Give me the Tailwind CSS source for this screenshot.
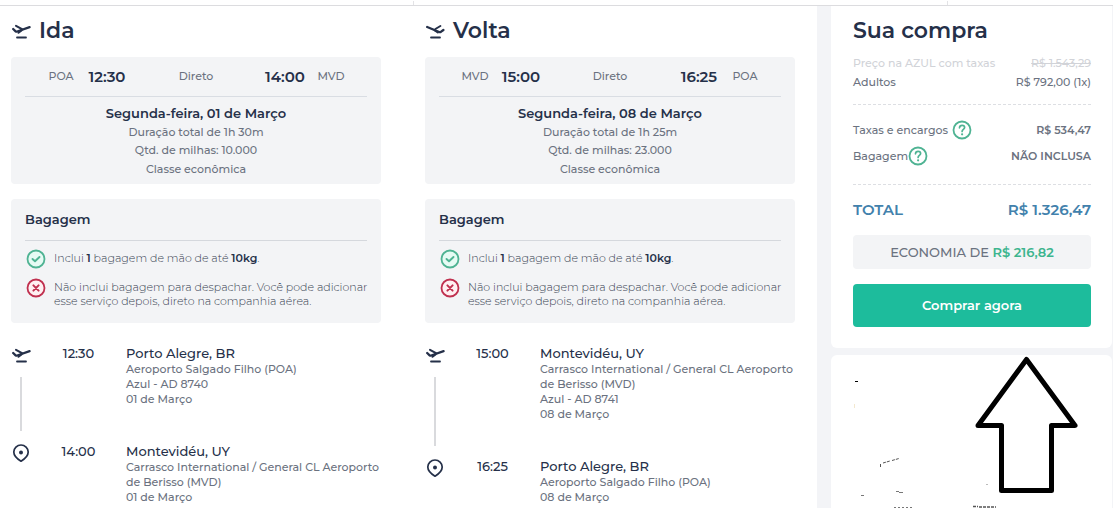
<!DOCTYPE html>
<html lang="pt-BR">
  <head>
    <meta charset="UTF-8" />
    <meta name="viewport" content="width=device-width, initial-scale=1.0" />
    <title>Sua compra</title>
    <script src="https://cdn.jsdelivr.net/npm/@tailwindcss/browser@4"></script>
  </head>
  <body class="bg-white font-['Montserrat','Inter',sans-serif] text-[11px] leading-[15px] font-medium text-[#6b7280]">
    <!-- Icon definitions -->
    <svg class="hidden" xmlns="http://www.w3.org/2000/svg">
      <symbol id="takeoff" viewBox="0 0 20 20" fill="none" stroke="currentColor" stroke-linecap="round" stroke-linejoin="round">
        <path d="M2.200 8l2.400 2.300c.5.400 1 .4 1.600.2L18.600 6.200" stroke-width="2.300" />
        <path d="M5 4.800l6 3.400M10.500 9.400L7.500 11.800" stroke-width="2" />
        <path d="M6 16.500h9" stroke-width="1.800" />
      </symbol>
      <symbol id="landing" viewBox="0 0 20 20" fill="none" stroke="currentColor" stroke-linecap="round" stroke-linejoin="round">
        <path d="M18.400 9l-2.600 1.900c-.5.300-1 .3-1.600.1L2.200 6" stroke-width="2.300" />
        <path d="M15.400 5l-5 3M9.800 9.400l3 2" stroke-width="2" />
        <path d="M6 16.500h9" stroke-width="1.800" />
      </symbol>
      <symbol id="pin" viewBox="0 0 20 20" fill="none" stroke="currentColor">
        <path d="M10 18.200C7 16.400 2.800 13.400 2.800 9a7.200 7 0 0 1 14.400 0c0 4.400-4.200 7.400-7.200 9.200z" stroke-width="1.700" stroke-linejoin="round" />
        <circle cx="10" cy="9.500" r="2" fill="currentColor" stroke="none" />
      </symbol>
      <symbol id="check" viewBox="0 0 20 20" fill="none" stroke="currentColor" stroke-linecap="round" stroke-linejoin="round">
        <circle cx="10" cy="10" r="8.500" fill="#e6fbf4" stroke-width="1.800" />
        <path d="M6.500 10l2.500 2.300 4.500-4.300" stroke-width="1.900" />
      </symbol>
      <symbol id="cross" viewBox="0 0 20 20" fill="none" stroke="currentColor" stroke-linecap="round">
        <circle cx="10" cy="10" r="8.500" fill="#fff0f2" stroke-width="1.800" />
        <path d="M7.400 7.400l5.200 5.200M12.600 7.400l-5.200 5.200" stroke-width="2" />
      </symbol>
      <symbol id="help" viewBox="0 0 20 20" fill="none" stroke="currentColor" stroke-linecap="round">
        <circle cx="10" cy="10" r="8.500" stroke-width="1.800" />
        <path d="M7.500 7.800c.1-1.700 1.200-2.500 2.600-2.500 1.500 0 2.500.9 2.500 2.200 0 1.900-2.500 1.900-2.500 4" stroke-width="1.700" />
        <circle cx="10.100" cy="14.300" r="1.100" fill="currentColor" stroke="none" />
      </symbol>
    </svg>

    <div class="flex h-[6px] items-end border-b border-[#dcdcdf]">
      <div class="ml-[37.1%] h-1 w-px bg-[#e3e3e6]"></div>
      <div class="ml-[47.9%] h-1 w-px bg-[#e3e3e6]"></div>
    </div>
    <div class="flex min-h-[502px] bg-[#f3f4f7]">
      <main class="grid flex-1 grid-cols-2 gap-11 bg-white pr-[22px] pl-[11px]">
        <!-- Ida -->
        <section>
          <h1 class="mt-[10px] flex h-[30px] items-center gap-2 text-[22px] leading-[30px] font-semibold text-[#253049]">
            <svg class="size-5"><use href="#takeoff" /></svg>Ida
          </h1>
          <div class="mt-[11px] h-[127px] rounded bg-[#f3f4f6] px-[14px] text-center">
            <div class="flex h-10 items-center justify-between border-b border-[#d9dde3] px-[22px]">
              <div class="flex items-center gap-3">
                <span class="flex w-7 justify-center">POA</span>
                <strong class="flex w-10 justify-center text-[15px] font-semibold text-[#253049]">12:30</strong>
              </div>
              <span>Direto</span>
              <div class="flex items-center gap-3">
                <strong class="flex w-10 justify-center text-[15px] font-semibold text-[#253049]">14:00</strong>
                <span class="flex w-7 justify-center">MVD</span>
              </div>
            </div>
            <p class="pt-[7px] pb-[1px] text-[13px] leading-[18px] font-semibold text-[#253049]">Segunda-feira, 01 de Março</p>
            <p class="leading-[18px]">Duração total de 1h 30m</p>
            <p class="leading-[18px]">Qtd. de milhas: 10.000</p>
            <p class="leading-5">Classe econômica</p>
          </div>
          <div class="mt-[15px] h-[124px] rounded bg-[#f3f4f6] px-[14px]">
            <h2 class="border-b border-[#d5d8dd] py-[12px] text-[13px] leading-[17px] font-semibold text-[#253049]">Bagagem</h2>
            <div class="flex gap-2 pt-[8px] pl-px leading-[14px] font-light text-[#374151]">
              <svg class="size-5 shrink-0 text-[#4fb393]"><use href="#check" /></svg>
              <p class="pt-[2px]">Inclui <b class="font-semibold text-[#253049]">1</b> bagagem de mão de até <b class="font-semibold text-[#253049]">10kg</b>.</p>
            </div>
            <div class="flex gap-2 pt-[9px] pl-px leading-[14px] font-light text-[#374151]">
              <svg class="size-5 shrink-0 text-[#c0304f]"><use href="#cross" /></svg>
              <p class="pt-[2px] whitespace-nowrap">Não inclui bagagem para despachar. Você pode adicionar<br />esse serviço depois, direto na companhia aérea.</p>
            </div>
          </div>
          <div class="mt-[22px] grid grid-cols-[20px_95px_1fr]">
            <div class="flex flex-col items-center text-[#253049]">
              <svg class="size-5"><use href="#takeoff" /></svg>
              <div class="my-3 w-[2px] flex-1 bg-[#d9dadd]"></div>
            </div>
            <time class="text-center text-[13px] leading-[17px] text-[#253049]">12:30</time>
            <div class="pb-[36px] whitespace-nowrap">
              <h3 class="text-[13px] leading-[17px] text-[#253049]">Porto Alegre, BR</h3>
              <p>Aeroporto Salgado Filho (POA)</p>
              <p>Azul - AD 8740</p>
              <p>01 de Março</p>
            </div>
            <svg class="size-5 text-[#253049]"><use href="#pin" /></svg>
            <time class="text-center text-[13px] leading-[17px] text-[#253049]">14:00</time>
            <div class="whitespace-nowrap">
              <h3 class="text-[13px] leading-[17px] text-[#253049]">Montevidéu, UY</h3>
              <p>Carrasco International / General CL Aeroporto<br />de Berisso (MVD)</p>
              <p>01 de Março</p>
            </div>
          </div>
        </section>

        <!-- Volta -->
        <section>
          <h1 class="mt-[10px] flex h-[30px] items-center gap-2 text-[22px] leading-[30px] font-semibold text-[#253049]">
            <svg class="size-5"><use href="#landing" /></svg>Volta
          </h1>
          <div class="mt-[11px] h-[127px] rounded bg-[#f3f4f6] px-[14px] text-center">
            <div class="flex h-10 items-center justify-between border-b border-[#d9dde3] px-[22px]">
              <div class="flex items-center gap-3">
                <span class="flex w-7 justify-center">MVD</span>
                <strong class="flex w-10 justify-center text-[15px] font-semibold text-[#253049]">15:00</strong>
              </div>
              <span>Direto</span>
              <div class="flex items-center gap-3">
                <strong class="flex w-10 justify-center text-[15px] font-semibold text-[#253049]">16:25</strong>
                <span class="flex w-7 justify-center">POA</span>
              </div>
            </div>
            <p class="pt-[7px] pb-[1px] text-[13px] leading-[18px] font-semibold text-[#253049]">Segunda-feira, 08 de Março</p>
            <p class="leading-[18px]">Duração total de 1h 25m</p>
            <p class="leading-[18px]">Qtd. de milhas: 23.000</p>
            <p class="leading-5">Classe econômica</p>
          </div>
          <div class="mt-[15px] h-[124px] rounded bg-[#f3f4f6] px-[14px]">
            <h2 class="border-b border-[#d5d8dd] py-[12px] text-[13px] leading-[17px] font-semibold text-[#253049]">Bagagem</h2>
            <div class="flex gap-2 pt-[8px] pl-px leading-[14px] font-light text-[#374151]">
              <svg class="size-5 shrink-0 text-[#4fb393]"><use href="#check" /></svg>
              <p class="pt-[2px]">Inclui <b class="font-semibold text-[#253049]">1</b> bagagem de mão de até <b class="font-semibold text-[#253049]">10kg</b>.</p>
            </div>
            <div class="flex gap-2 pt-[9px] pl-px leading-[14px] font-light text-[#374151]">
              <svg class="size-5 shrink-0 text-[#c0304f]"><use href="#cross" /></svg>
              <p class="pt-[2px] whitespace-nowrap">Não inclui bagagem para despachar. Você pode adicionar<br />esse serviço depois, direto na companhia aérea.</p>
            </div>
          </div>
          <div class="mt-[22px] grid grid-cols-[20px_95px_1fr]">
            <div class="flex flex-col items-center text-[#253049]">
              <svg class="size-5"><use href="#takeoff" /></svg>
              <div class="my-3 w-[2px] flex-1 bg-[#d9dadd]"></div>
            </div>
            <time class="text-center text-[13px] leading-[17px] text-[#253049]">15:00</time>
            <div class="pb-[36px] whitespace-nowrap">
              <h3 class="text-[13px] leading-[17px] text-[#253049]">Montevidéu, UY</h3>
              <p>Carrasco International / General CL Aeroporto<br />de Berisso (MVD)</p>
              <p>Azul - AD 8741</p>
              <p>08 de Março</p>
            </div>
            <svg class="size-5 text-[#253049]"><use href="#pin" /></svg>
            <time class="text-center text-[13px] leading-[17px] text-[#253049]">16:25</time>
            <div class="whitespace-nowrap">
              <h3 class="text-[13px] leading-[17px] text-[#253049]">Porto Alegre, BR</h3>
              <p>Aeroporto Salgado Filho (POA)</p>
              <p>08 de Março</p>
            </div>
          </div>
        </section>
      </main>

      <aside class="mr-px ml-[14px] flex w-[281px] flex-col gap-[7px]">
        <!-- Resumo -->
        <div class="h-[342px] rounded-b-md bg-white pr-[21px] pl-[22px]">
          <h1 class="mt-[10px] text-[22px] leading-[30px] font-semibold text-[#253049]">Sua compra</h1>
          <div class="mt-[8px] flex justify-between leading-[18px] text-[#d1d3d8]">
            <span>Preço na AZUL com taxas</span>
            <s>R$ 1.543,29</s>
          </div>
          <div class="flex justify-between pb-[12px] leading-5">
            <span>Adultos</span>
            <span>R$ 792,00 (1x)</span>
          </div>
          <div class="border-y border-dashed border-[#dddfe3] pt-[12px] pb-[15px]">
            <div class="flex h-[26px] items-center justify-between">
              <span class="flex items-center gap-1">Taxas e encargos
                <button type="button" aria-label="Ajuda sobre taxas" class="size-5 text-[#4fb393]"><svg class="size-5"><use href="#help" /></svg></button>
              </span>
              <strong class="font-semibold">R$ 534,47</strong>
            </div>
            <div class="flex h-[26px] items-center justify-between">
              <span class="flex items-center">Bagagem
                <button type="button" aria-label="Ajuda sobre bagagem" class="size-5 text-[#4fb393]"><svg class="size-5"><use href="#help" /></svg></button>
              </span>
              <strong class="font-semibold">NÃO INCLUSA</strong>
            </div>
          </div>
          <div class="flex justify-between pt-[16px] text-[15px] leading-[18px] font-semibold text-[#4281ac]">
            <span>TOTAL</span>
            <span>R$ 1.326,47</span>
          </div>
          <p class="mt-[16px] rounded-sm bg-[#f3f4f6] text-center text-[13px] leading-[34px]">
            ECONOMIA DE <b class="font-semibold text-[#3db58e]">R$ 216,82</b>
          </p>
          <button type="button" class="mt-[15px] h-[43px] w-full rounded bg-[#1dbc9c] text-[13px] font-semibold text-white">Comprar agora</button>
        </div>

        <div class="relative flex-1 overflow-hidden rounded-t-md bg-white">
          <svg class="absolute top-0 left-0" width="281" height="153" viewBox="831 355 281 153" fill="none" stroke="#000">
            <path d="M1026.500 359.500L1075 425.500h-23.500v65h-50v-65H978z" stroke-width="5" stroke-linejoin="round" />
            <path d="M855 381.500h3" stroke-width="1" />
            <path d="M880.500 464v3M883 463l7-2M892 460.500l7-2" stroke="#555" stroke-width="1" stroke-dasharray="3 1" />
            <path d="M861 495.500h3M896 491.500h3M899 492.500h4" stroke="#777" stroke-width="1" />
            <path d="M894 507.500h18" stroke="#777" stroke-width="1" stroke-dasharray="2 2" />
            <path d="M973 506.500h5M979 507h17" stroke="#555" stroke-width="1.500" stroke-dasharray="3 1" />
            <path d="M986 484.500h2" stroke="#bbb" />
            <path d="M854.500 404v4" stroke="#f3e8cf" />
          </svg>
        </div>
      </aside>
    </div>
  </body>
</html>
